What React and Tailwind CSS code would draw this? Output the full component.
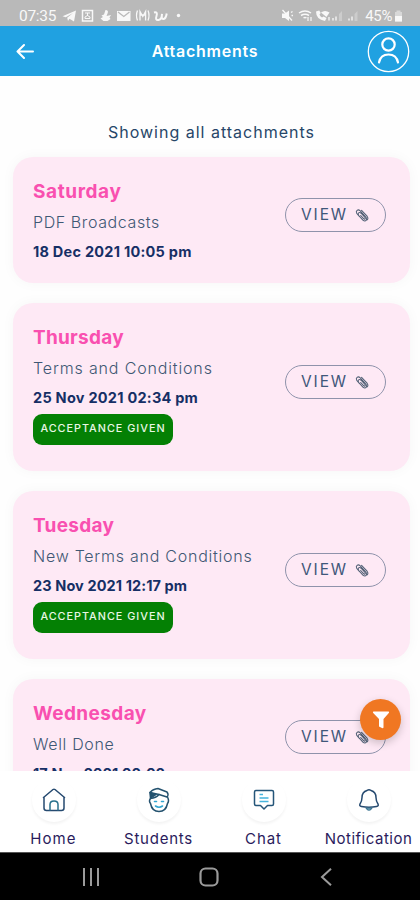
/**
 * Attachments screen: list of documents sent to parents, with the phone's
 * status bar on top and the app tabs plus system keys at the bottom.
 */

const ATTACHMENTS = [
  { day: 'Saturday', dayClass: 'tracking-[0.6px]', title: 'PDF Broadcasts', titleClass: 'tracking-[0.6px]', date: '18 Dec 2021 10:05 pm', dateClass: 'tracking-[0.25px]', height: 'h-[126px]', accepted: false },
  { day: 'Thursday', dayClass: 'tracking-[0.25px]', title: 'Terms and Conditions', titleClass: 'tracking-[0.85px]', date: '25 Nov 2021 02:34 pm', dateClass: 'tracking-[0.25px]', height: 'h-[168px]', accepted: true },
  { day: 'Tuesday', dayClass: 'tracking-[0.3px]', title: 'New Terms and Conditions', titleClass: 'tracking-[0.75px]', date: '23 Nov 2021 12:17 pm', dateClass: 'tracking-[0.1px]', height: 'h-[168px]', accepted: true },
  { day: 'Wednesday', dayClass: 'tracking-[0.4px]', title: 'Well Done', titleClass: 'tracking-[0.65px]', date: '17 Nov 2021 02:02 pm', dateClass: 'tracking-[0.1px]', height: 'h-[126px]', accepted: false },
];

function StatusBar() {
  return (
    <div className="h-[26px] shrink-0 bg-[#b9b9b9] text-[#f8f8f8] flex items-end justify-between pl-[19px] pr-[17px] pb-0.5">
      <div className="flex items-center">
        <span className="font-[Roboto] text-[15.5px] leading-4 w-[43px] whitespace-nowrap tracking-[-0.3px]">07:35</span>
        <svg width="122" height="14" viewBox="62 10 122 14" fill="currentColor">
          <path d="M62.500 17.300 76 11.500 74 22.500 69.500 19.800 68 22 67.200 18.700 73 14 65.800 18.300z" />
          <path d="M82.500 11.500h10v10.500h-10z" fill="none" stroke="currentColor" strokeWidth="1.5" />
          <path d="M85 14h5M87.500 14v3M85 19.500v-1.500l2.500-1.500 2.500 1.500v1.500z" fill="none" stroke="currentColor" />
          <path d="M105.500 11q3.500 0 2 3.500l-1 2.500 4.500-1-1.500 2.500 1 1.500-3 2h-4l-3-2.500 2.500-1.500-1.500-1.500 2.500-1z" />
          <path d="M117 12h13.500v10H117z" />
          <path d="m118 13 5.800 4.500L129.500 13" fill="none" stroke="#b9b9b9" strokeWidth="1.300" />
          <path d="M137.500 11.500q-2 5 0 10M148 11.500q2 5 0 10M140 21.500v-9l2.800 5 2.800-5v9M140 16h5.600" fill="none" stroke="currentColor" strokeWidth="1.300" />
          <path d="M154 13.500q4-1 2.500 3.500t2 4 3.500-6q-1 5.500 1.500 5t3.200-5.500" fill="none" stroke="currentColor" strokeWidth="2" />
          <circle cx="178.500" cy="16.500" r="1.700" />
        </svg>
      </div>
      <div className="flex items-center">
        <svg width="84" height="14" viewBox="280 10 84 14" fill="currentColor">
          <path d="M281 14.500h3l4-3v10.500l-4-3h-3z" />
          <path d="m281.500 11 9.500 10.500M290 13.500l1.500-1M290.500 16.500h1.500" stroke="currentColor" strokeWidth="1.300" />
          <path d="M298 14q6-4 12 0M300 16.500q4-2.500 8 0M302.500 19q1.500-1 3 0" fill="none" stroke="currentColor" strokeWidth="1.500" />
          <path d="M307 22v-4M310 18v4" stroke="currentColor" strokeWidth="1.200" />
          <path d="M315 12.500q0 8 9 9.500l1.500-3-3-1.500-1.500 1q-2-1-2.500-3l1.200-1.500-1.500-2.500z" />
          <path d="M320 13.500q4-3 8.500 0l-3 4.500z" />
          <path d="M328 21.500v-3.500M332 21.500v-2.500M335 21.500v-4M348 21.500v-2M351 21.500v-4" stroke="currentColor" strokeWidth="1.300" />
          <path d="M338 22v-7l3-3v10zM353.500 22v-7l3-3v10z" opacity="0.300" />
        </svg>
        <span className="font-[Roboto] text-[15px] leading-4 tracking-[-0.4px] whitespace-nowrap">45%</span>
        <svg className="ml-0.5" width="9" height="14" viewBox="0 0 9 14" fill="currentColor">
          <path d="M2.500 1.500h4V3h1.500v9.500H1V3h1.500z" opacity="0.500" />
          <path d="M1 7h7v5.500H1z" />
        </svg>
      </div>
    </div>
  );
}

function Header() {
  return (
    <header className="h-[50px] shrink-0 bg-[#20a1e1] text-white grid grid-cols-[60px_1fr_60px] items-center">
      <svg className="ml-4" width="18" height="16" viewBox="0 0 18 16" fill="none" stroke="currentColor" strokeWidth="2" strokeLinecap="round" strokeLinejoin="round">
        <path d="M17 8.500H1.500M8 2 1.500 8.500 8 15" />
      </svg>
      <h1 className="text-center text-[16px] font-semibold tracking-[0.75px] -translate-x-[5px]">Attachments</h1>
      <svg className="ml-[7px] mt-px" width="43" height="43" viewBox="0 0 43 43" fill="none" stroke="currentColor">
        <circle cx="21.500" cy="21.500" r="20.200" strokeWidth="1.300" />
        <circle cx="21.500" cy="14.500" r="6.200" strokeWidth="2.200" />
        <path d="M12 32.500q1.500-8 9.500-8t9.500 8" strokeWidth="2.200" strokeLinecap="round" />
      </svg>
    </header>
  );
}

function ViewButton() {
  return (
    <button className="w-[101px] h-[34px] mb-2.5 shrink-0 rounded-full border border-[#8f93ab] flex items-center pl-[15px] text-[#40577a]">
      <span className="text-[15.5px] tracking-[1.9px] w-[54px] text-left whitespace-nowrap">VIEW</span>
      <svg width="14" height="15" viewBox="0 0 16 16" fill="none" stroke="#526176" strokeWidth="1.200" strokeLinecap="round" strokeLinejoin="round">
        <path d="M5.500 9.500 2 5.500Q.8 3.500 2.400 2.200T5.700 2.400l6.800 7.300q1.700 2.300.3 3.800t-3.800-.2L4.300 8q-1.400-2-.2-3t2.900.4l4.400 4.900q.8 1.200 0 1.700t-1.600-.4L6.500 8" />
        <path d="m7.500 2.200 6.300 6.600q1.600 2.300.4 4" />
      </svg>
    </button>
  );
}

function AttachmentCard({ item }) {
  return (
    <article className={`${item.height} shrink-0 rounded-[20px] bg-[#fee9f5] pl-5 pr-6 flex items-center justify-between shadow-[0_0_14px_rgba(0,0,0,0.035)]`}>
      <div className="self-start pt-[22px] whitespace-nowrap">
        <h2 className={`text-[19px] leading-[26px] font-bold text-[#f950b0] ${item.dayClass}`}>{item.day}</h2>
        <p className={`mt-[3px] text-[16px] leading-[28px] font-light text-[#3f5874] ${item.titleClass}`}>{item.title}</p>
        <p className={`mt-[3px] text-[14.5px] leading-[26px] font-bold text-[#162f65] ${item.dateClass}`}>{item.date}</p>
        {item.accepted && (
          <span className="mt-[3px] w-[140px] h-[31px] rounded-[9px] bg-[#048004] text-[#e9f7e5] flex items-center justify-center text-[10.8px] font-medium tracking-[1px]">
            ACCEPTANCE GIVEN
          </span>
        )}
      </div>
      <ViewButton />
    </article>
  );
}

function HomeIcon() {
  return (
    <svg width="24" height="24" viewBox="0 0 24 24" fill="none" stroke="#264a70" strokeWidth="1.500" strokeLinecap="round" strokeLinejoin="round">
      <path d="M1.500 9.500 11 1.500q1-.7 2 0l9.500 8M2 9v11q0 2.500 2.500 2.500h15q2.500 0 2.500-2.500V9" />
      <path d="M8 22v-5.500q0-3.500 4-3.500t4 3.500V22" stroke="#28708c" />
    </svg>
  );
}

function StudentIcon() {
  return (
    <svg width="22" height="26" viewBox="0 0 22 26" fill="none" stroke="#24526f" strokeWidth="1.500" strokeLinecap="round" strokeLinejoin="round">
      <path d="M2 5.500Q5 2 10 1.500l9 3.500q2 2.500 0 5l-8-2.500" />
      <path d="M2 5.500 11 7.500Q8 11 2.500 11.500z" />
      <path d="m2.500 6 5.500 1.500-5 3.500z" fill="#24526f" />
      <path d="M2.500 11.500q-2 2.500 0 5 1.500 8 8.500 8t8.500-8q2-2.500 0-6.500" />
      <path d="M6.500 14.500h2M13.500 14.500h2M7.500 19q3.500 2.500 7 0" stroke="#32a6d2" strokeWidth="1.600" />
    </svg>
  );
}

function ChatIcon() {
  return (
    <svg width="22" height="22" viewBox="0 0 22 22" fill="none" stroke="#245579" strokeWidth="1.500" strokeLinejoin="round">
      <path d="M3 1.500h16q1.500 0 1.500 1.500v12q0 1.500-1.500 1.500h-4.500L11 20l-3.500-3.500H3q-1.500 0-1.500-1.500V3q0-1.500 1.500-1.500z" />
      <path d="M6.500 5.500H10M6.500 9h9M6.500 12.500h9" stroke="#46b4dd" strokeWidth="1.300" />
    </svg>
  );
}

function BellIcon() {
  return (
    <svg width="22" height="24" viewBox="0 0 22 24" fill="none" stroke="#264a70" strokeWidth="1.500" strokeLinecap="round" strokeLinejoin="round">
      <path d="M9 2.500q2-1.500 4 0 5 1.500 5 7 0 3.500 2 6.500 1 2-1.500 2.500-7.500 1.500-15 0Q1 18 2 16q2-3 2-6.500 0-5.500 5-7z" />
      <path d="M8 20q3 4.500 6 0z" fill="#78a8bd" stroke="#3b7491" strokeWidth="1.200" />
    </svg>
  );
}

const TABS = [
  { label: 'Home', icon: HomeIcon, labelClass: 'tracking-[1.1px]' },
  { label: 'Students', icon: StudentIcon, labelClass: 'tracking-[0.75px]' },
  { label: 'Chat', icon: ChatIcon, labelClass: 'tracking-[0.9px]' },
  { label: 'Notification', icon: BellIcon, labelClass: 'tracking-[0.5px]' },
];

function TabBar() {
  return (
    <nav className="h-[81px] shrink-0 bg-white grid grid-cols-4">
      {TABS.map(({ label, icon: Icon, labelClass }) => (
        <div key={label} className="flex flex-col items-center pt-[7px] pl-[2px]">
          <span className="size-11 rounded-full flex items-center justify-center shadow-[0_2px_3px_rgba(0,0,0,0.05)]">
            <Icon />
          </span>
          <span className={`mt-[7px] text-[15px] leading-5 text-[#2a1b5c] whitespace-nowrap ${labelClass}`}>{label}</span>
        </div>
      ))}
    </nav>
  );
}

function SystemKeys() {
  return (
    <div className="h-12 shrink-0 bg-black border-t border-[#555] flex items-center text-[#9b9b9b]">
      <svg className="ml-[82px]" width="18" height="18" viewBox="0 0 18 18" stroke="currentColor" strokeWidth="2">
        <path d="M2 0v18M9 0v18M16 0v18" />
      </svg>
      <svg className="ml-[99px]" width="20" height="20" viewBox="0 0 20 20" fill="none" stroke="currentColor" strokeWidth="2.200">
        <rect x="1.500" y="1.500" width="17" height="17" rx="5" />
      </svg>
      <svg className="ml-[101px]" width="12" height="18" viewBox="0 0 12 18" fill="none" stroke="currentColor" strokeWidth="2">
        <path d="M11 .8 2 9l9 8.200" />
      </svg>
    </div>
  );
}

export default function App() {
  return (
    <div className="w-[420px] h-[900px] overflow-hidden flex flex-col bg-white font-[Inter,sans-serif]">
      <StatusBar />
      <Header />
      <main className="relative flex-1 min-h-0 overflow-hidden bg-[#fefefe] pl-[13px] pr-[10px]">
        <p className="pt-[43px] pb-[12px] text-center text-[16px] leading-[26px] tracking-[1px] text-[#264668]">
          Showing all attachments
        </p>
        <div className="flex flex-col gap-5">
          {ATTACHMENTS.map((item) => (
            <AttachmentCard key={item.day} item={item} />
          ))}
        </div>
        {/* Filter button floats over the list */}
        <button className="absolute right-[19px] bottom-[31px] size-[41px] rounded-full bg-[#f07722] flex items-center justify-center shadow-[0_3px_8px_rgba(0,0,0,0.2)]">
          <svg width="18" height="18" viewBox="0 0 18 18" fill="#fff">
            <path d="M1.500.5h15q1.200.3.300 1.500L11.500 8v8.500q-.3 1-1.500.6L7 15.500V8L1.200 2Q.4.800 1.500.5z" />
          </svg>
        </button>
      </main>
      <TabBar />
      <SystemKeys />
    </div>
  );
}
